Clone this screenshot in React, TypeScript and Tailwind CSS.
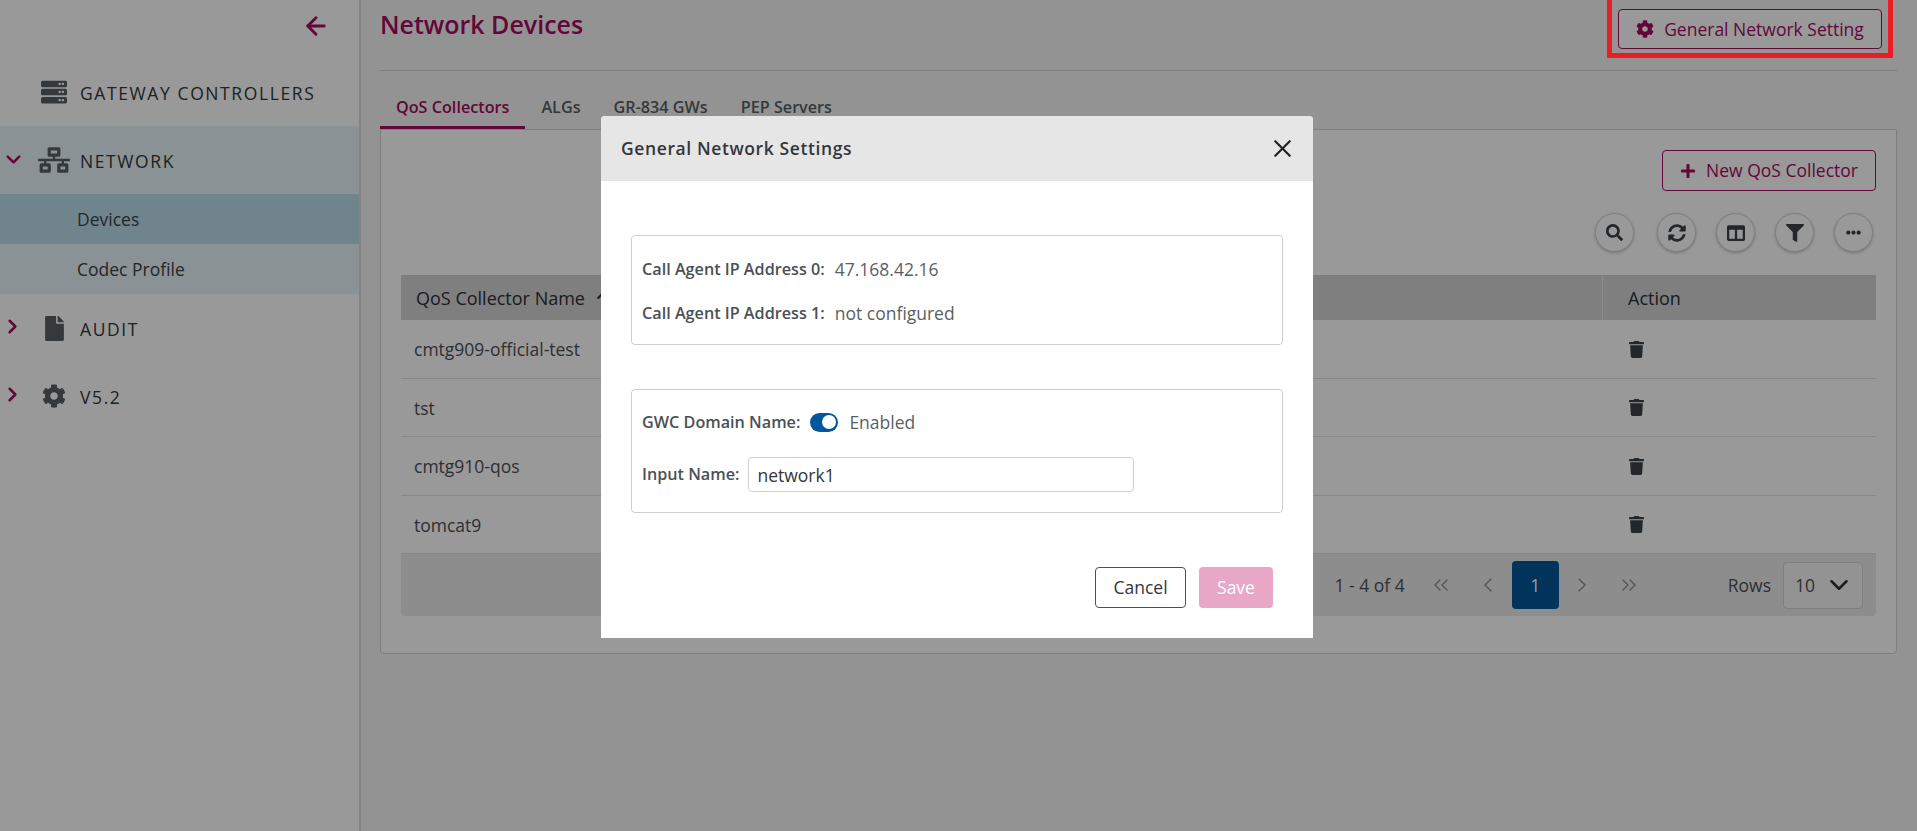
import { ArrowLeft, ChevronDown, ChevronLeft, ChevronRight, ChevronsLeft, ChevronsRight, X } from "lucide-react";
import {
  FaArrowUp,
  FaCog,
  FaColumns,
  FaEllipsisH,
  FaFile,
  FaFilter,
  FaNetworkWired,
  FaPlus,
  FaSearch,
  FaServer,
  FaSyncAlt,
  FaTrash,
} from "react-icons/fa";
import { ReactNode } from "react";

const rows = ["cmtg909-official-test", "tst", "cmtg910-qos", "tomcat9"];

const NavItem = ({
  icon,
  label,
  open,
  active,
}: {
  icon: ReactNode;
  label: string;
  open?: boolean;
  active?: boolean;
}) => (
  <div className={`flex h-[68px] items-center ${active ? "bg-[#e7f4f8]" : ""}`}>
    <div className="flex w-[30px] justify-center text-[#a50a5e]">
      {open === undefined ? null : open ? (
        <ChevronDown size={23} strokeWidth={2.6} className="-mt-[1px] -ml-[3px]" />
      ) : (
        <ChevronRight size={23} strokeWidth={2.6} className="-mt-[3px] -ml-[6px]" />
      )}
    </div>
    <div className="flex w-[50px] justify-center pr-[2px] text-[#5a5f64]">{icon}</div>
    <span className="mt-[2px] text-[17.5px] font-medium tracking-[1.6px] text-[#33373b]">{label}</span>
  </div>
);

const Sidebar = () => (
  <aside className="w-[361px] shrink-0 border-r-2 border-[#dadada] bg-white">
    <div className="flex h-[58px] justify-end pt-[12px] pr-[29px] text-[#a50a5e]">
      <ArrowLeft size={28} strokeWidth={2.5} />
    </div>
    <NavItem icon={<FaServer size={26} />} label="GATEWAY CONTROLLERS" />
    <NavItem icon={<FaNetworkWired size={32} />} label="NETWORK" open active />
    <div className="flex h-[50px] items-center bg-[#b9dde8] pl-[77px] text-[17.5px] text-[#3c4146]">Devices</div>
    <div className="flex h-[50px] items-center bg-[#e7f4f8] pl-[77px] text-[17.5px] text-[#3c4146]">Codec Profile</div>
    <NavItem icon={<FaFile size={25} />} label="AUDIT" open={false} />
    <NavItem icon={<FaCog size={24} />} label="V5.2" open={false} />
  </aside>
);

const RoundButton = ({ children, className = "" }: { children: ReactNode; className?: string }) => (
  <button
    className={`flex h-[39px] w-[39px] items-center justify-center rounded-full border border-[#d5d5d5] bg-white text-[#3c4146] shadow-[0_1px_3px_rgba(0,0,0,0.25)] ${className}`}
  >
    {children}
  </button>
);

const Content = () => (
  <main className="min-w-0 flex-1 bg-[#f5f5f5] pr-[20px] pl-[19px]">
    <div className="flex h-[71px] items-start justify-between border-b border-[#d4d4d4]">
      <h1 className="pt-[7px] text-[25px] leading-[34px] font-semibold text-[#a50a5e]">Network Devices</h1>
      <button className="mt-[9px] mr-[15px] flex h-[40px] w-[264px] items-center justify-center gap-[10px] rounded border border-[#a50a5e] bg-white text-[17.5px] text-[#a50a5e]">
        <FaCog size={18} />
        General Network Setting
      </button>
    </div>

    <div className="mt-[17px] flex h-[41px] items-start text-[16.2px] font-semibold text-[#5a5f64]">
      <div className="h-[41px] border-b-[3px] border-[#a50a5e] px-[16px] pt-[7px] text-[#a50a5e]">QoS Collectors</div>
      <div className="px-[16px] pt-[7px]">ALGs</div>
      <div className="px-[17px] pt-[7px]">GR-834 GWs</div>
      <div className="px-[16px] pt-[7px]">PEP Servers</div>
    </div>

    <section className="h-[525px] rounded-b border border-[#d4d4d4] bg-white px-[20px] pt-[20px]">
      <div className="flex justify-end">
        <button className="flex h-[41px] w-[214px] items-center justify-center gap-[10px] rounded border border-[#a50a5e] text-[17.5px] text-[#a50a5e]">
          <FaPlus size={16} />
          New QoS Collector
        </button>
      </div>
      <div className="mt-[22px] flex h-[39px] justify-end gap-[20px] pr-[3px]">
        <RoundButton className="mr-[3px]"><FaSearch size={17} /></RoundButton>
        <RoundButton><FaSyncAlt size={18} /></RoundButton>
        <RoundButton><FaColumns size={18} /></RoundButton>
        <RoundButton><FaFilter size={18} /></RoundButton>
        <RoundButton><FaEllipsisH size={15} /></RoundButton>
      </div>
      <div className="mt-[23px]">
        <div className="flex h-[45px] items-center bg-[#d4d4d4] pt-[1px] text-[18px] font-medium text-[#2c3034]">
          <div className="flex flex-1 items-center gap-[11px] pl-[15px]">
            QoS Collector Name
            <FaArrowUp size={14} className="text-[#3a2c20]" />
          </div>
          <div className="flex h-full w-[274px] items-center border-l border-[#e8e8e8] pl-[25px]">Action</div>
        </div>
        {rows.map((row) => (
          <div key={row} className="flex h-[58.5px] items-center border-b border-[#e2e2e2] pt-[1px] text-[17.5px] text-[#4b5055]">
            <div className="flex-1 pl-[13px]">{row}</div>
            <div className="w-[274px] pl-[26px] text-[#3c4146]"><FaTrash size={17} /></div>
          </div>
        ))}
        <div className="flex h-[62px] items-center justify-end rounded-b bg-[#ebebeb] pr-[13px] text-[17.5px] text-[#4b5055]">
          <span className="mr-[13px]">1 - 4 of 4</span>
          <div className="flex items-center text-[#8f9398]">
            <span className="flex w-[47px] justify-center"><ChevronsLeft size={24} strokeWidth={1.5} /></span>
            <span className="flex w-[47px] justify-center"><ChevronLeft size={24} strokeWidth={1.5} /></span>
            <span className="flex h-[48px] w-[47px] items-center justify-center rounded bg-[#01579b] text-white">1</span>
            <span className="flex w-[47px] justify-center"><ChevronRight size={24} strokeWidth={1.5} /></span>
            <span className="flex w-[47px] justify-center"><ChevronsRight size={24} strokeWidth={1.5} /></span>
          </div>
          <span className="mr-[12px] ml-[75px]">Rows</span>
          <div className="flex h-[47px] w-[80px] items-center justify-between rounded border border-[#d4d4d4] bg-[#f5f5f5] pr-[8px] pl-[11px]">
            10
            <ChevronDown size={30} strokeWidth={2} className="text-[#2c3034]" />
          </div>
        </div>
      </div>
    </section>
  </main>
);

const Modal = () => (
  <div className="absolute top-[116px] left-[601px] w-[712px] overflow-hidden rounded-t bg-white">
    <div className="flex h-[65px] items-center justify-between bg-[#e6e6e6] pr-[16px] pl-[20px]">
      <span className="-mt-[1px] text-[17.5px] font-semibold tracking-[0.6px] text-[#33373b]">General Network Settings</span>
      <X size={29} strokeWidth={1.8} className="text-[#1f2226]" />
    </div>
    <div className="px-[30px] pt-[54px] pb-[30px]">
      <div className="flex h-[110px] flex-col gap-[14px] rounded border border-[#cfcfcf] px-[10px] pt-[18px]">
        <div className="flex h-[30px] items-center gap-[10px] text-[16.2px] font-semibold text-[#4b5055]">
          Call Agent IP Address 0:
          <span className="text-[17.5px] font-normal text-[#5a5f64]">47.168.42.16</span>
        </div>
        <div className="flex h-[30px] items-center gap-[10px] text-[16.2px] font-semibold text-[#4b5055]">
          Call Agent IP Address 1:
          <span className="text-[17.5px] font-normal text-[#5a5f64]">not configured</span>
        </div>
      </div>
      <div className="mt-[44px] h-[124px] rounded border border-[#cfcfcf] px-[10px] pt-[16px]">
        <div className="flex h-[32px] items-center text-[16.2px] font-semibold text-[#4b5055]">
          GWC Domain Name:
          <span className="mr-[11px] ml-[10px] flex h-[19px] w-[28px] items-center justify-end rounded-full bg-[#01579b] pr-[2px]">
            <span className="h-[14px] w-[14px] rounded-full bg-white" />
          </span>
          <span className="text-[17.5px] font-normal text-[#5a5f64]">Enabled</span>
        </div>
        <div className="mt-[19px] flex h-[35px] items-center text-[16.2px] font-semibold text-[#4b5055]">
          Input Name:
          <input
            readOnly
            value="network1"
            className="ml-[9px] h-[35px] w-[386px] rounded border border-[#cfcfcf] px-[8px] text-[17.5px] font-normal text-[#33373b]"
          />
        </div>
      </div>
      <div className="mt-[54px] flex justify-end gap-[13px] pr-[10px]">
        <button className="h-[41px] w-[91px] rounded border border-[#4b5055] text-[17.5px] text-[#33373b]">Cancel</button>
        <button className="h-[41px] w-[74px] rounded bg-[#e9a7c8] text-[17.5px] text-white">Save</button>
      </div>
    </div>
  </div>
);

export default function App() {
  return (
    <div className="relative h-[831px] w-[1917px] overflow-hidden font-['Open_Sans',sans-serif]">
      <div className="flex h-full">
        <Sidebar />
        <Content />
      </div>
      <div className="absolute inset-0 bg-black/40" />
      <Modal />
      {/* red annotation round the settings button */}
      <div className="absolute top-[-6px] left-[1607px] h-[64px] w-[286px] border-[5px] border-[#ed1c24]" />
    </div>
  );
}
